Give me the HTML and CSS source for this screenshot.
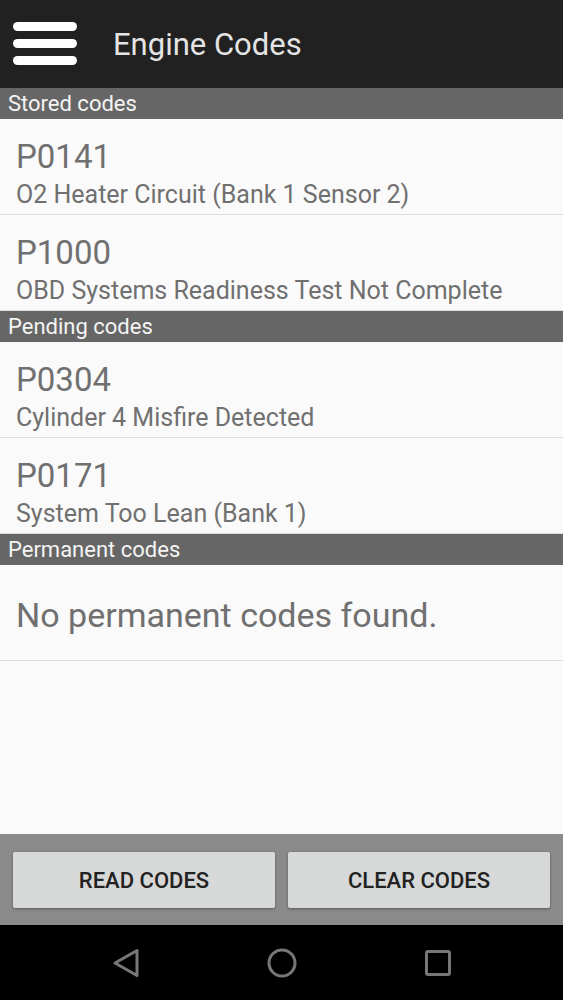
FILE: index.html
```html
<!DOCTYPE html>
<html lang="en">
  <head>
    <meta charset="UTF-8" />
    <meta name="viewport" content="width=device-width, initial-scale=1.0" />
    <title>Engine Codes</title>
    <link rel="stylesheet" href="styles.css">
  </head>
  <body>
    <div class="toolbar">
      <svg class="menu" width="64" height="43" viewBox="0 0 64 43">
        <rect x="0" y="0" width="64" height="9" rx="4.5" fill="#fff" />
        <rect x="0" y="17" width="64" height="9" rx="4.5" fill="#fff" />
        <rect x="0" y="34" width="64" height="9" rx="4.5" fill="#fff" />
      </svg>
      <div class="title">Engine Codes</div>
    </div>

    <div class="content">
      <div class="section">Stored codes</div>
      <div class="row">
        <div class="code">P0141</div>
        <div class="desc">O2 Heater Circuit (Bank 1 Sensor 2)</div>
      </div>
      <div class="row">
        <div class="code">P1000</div>
        <div class="desc">OBD Systems Readiness Test Not Complete</div>
      </div>

      <div class="section">Pending codes</div>
      <div class="row">
        <div class="code">P0304</div>
        <div class="desc">Cylinder 4 Misfire Detected</div>
      </div>
      <div class="row">
        <div class="code">P0171</div>
        <div class="desc">System Too Lean (Bank 1)</div>
      </div>

      <div class="section">Permanent codes</div>
      <div class="row empty">No permanent codes found.</div>
    </div>

    <div class="actions">
      <button class="btn">READ CODES</button>
      <button class="btn">CLEAR CODES</button>
    </div>

    <div class="navbar">
      <svg width="30" height="30" viewBox="0 0 30 30">
        <polygon points="4,15 26,2.5 26,27.5" fill="none" stroke="#777" stroke-width="3" stroke-linejoin="round" />
      </svg>
      <svg width="30" height="30" viewBox="0 0 30 30">
        <circle cx="15" cy="15" r="13" fill="none" stroke="#777" stroke-width="3" />
      </svg>
      <svg width="30" height="30" viewBox="0 0 30 30">
        <rect x="3.5" y="3.5" width="23" height="23" rx="1.5" fill="none" stroke="#777" stroke-width="3" />
      </svg>
    </div>
  </body>
</html>
```

FILE: styles.css
```css
body {
  margin: 0;
  height: 1000px;
  display: flex;
  flex-direction: column;
  font-family: Roboto, "Noto Sans", Arial, sans-serif;
  background: #fafafa;
}
.toolbar {
  height: 88px;
  flex-shrink: 0;
  background: #212121;
  display: flex;
  align-items: center;
  padding-left: 13px;
  box-sizing: border-box;
}
.menu {
  display: block;
  margin-top: -1px;
}
.title {
  margin-left: 36px;
  font-size: 31px;
  color: #e4e4e4;
}
.content {
  flex: 1;
  background: #fafafa;
}
.section {
  height: 30px;
  padding: 1px 8px 0;
  line-height: 30px;
  font-size: 22px;
  color: #f4f4f4;
  background: #666;
}
.row {
  height: 95px;
  padding: 0 16px;
  border-bottom: 1px solid #dcdcdc;
  color: #707070;
  overflow: hidden;
}
.code {
  padding-top: 19px;
  font-size: 33px;
  line-height: 38px;
}
.desc {
  margin-top: 5px;
  font-size: 25px;
  line-height: 28px;
  white-space: nowrap;
}
.empty {
  font-size: 34px;
  line-height: 40px;
}
.empty::before {
  content: "";
  display: block;
  height: 30px;
}
.actions {
  height: 91px;
  flex-shrink: 0;
  box-sizing: border-box;
  padding: 18px 13px 17px;
  background: #8a8a8a;
  display: flex;
  gap: 13px;
}
.btn {
  flex: 1;
  height: 56px;
  border: none;
  border-radius: 2px;
  background: #d7d8d8;
  box-shadow: 0 1px 3px rgba(0, 0, 0, 0.35);
  font-family: Roboto, Arial, sans-serif;
  font-weight: 500;
  font-size: 22px;
  color: #222;
}
.navbar {
  height: 75px;
  flex-shrink: 0;
  background: #000;
  display: flex;
  align-items: center;
  justify-content: center;
  gap: 126px;
}
.navbar svg {
  display: block;
}
```
